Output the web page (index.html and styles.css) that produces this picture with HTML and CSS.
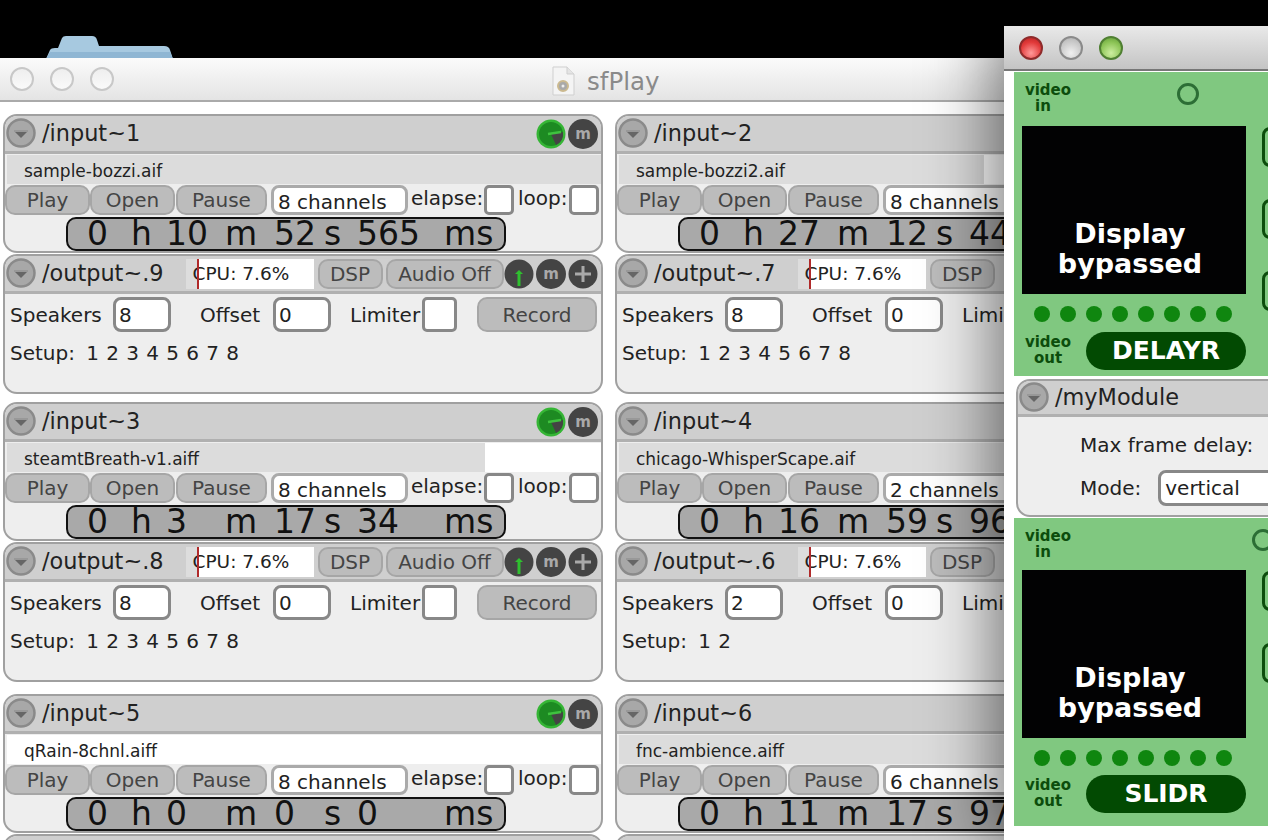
FILE: index.html
```html
<!doctype html>
<html>
<head>
    <meta charset="utf-8">
    <title>sfPlay</title>
    <link rel="stylesheet" href="styles.css">
</head>
<body>
<svg class="defs" width="0" height="0">
    <symbol id="arrow" viewBox="0 0 30 30">
        <circle cx="15" cy="15" r="13.5" fill="#a8a8a8" stroke="#8a8a8a" stroke-width="2.5"/>
        <path d="M9 14h12l-6 6z" fill="#666"/>
        <path d="M8 13h14" stroke="#888" stroke-width="1"/>
    </symbol>
    <symbol id="rec" viewBox="0 0 30 30">
        <circle cx="15" cy="15" r="14.5" fill="#35b535"/>
        <circle cx="15" cy="15" r="12" fill="#1d8a22"/>
        <path d="M15 15L27 13A12 12 0 0 1 20 26z" fill="#444"/>
        <path d="M12 15l13-2" stroke="#3fc23f" stroke-width="2.5"/>
    </symbol>
    <symbol id="meter" viewBox="0 0 30 30">
        <circle cx="15" cy="15" r="14.5" fill="#444"/>
        <path d="M15 27V13" stroke="#2fc02f" stroke-width="3"/>
        <path d="M11 15l4-4 4 4z" fill="#2fc02f"/>
    </symbol>
    <symbol id="plus" viewBox="0 0 30 30">
        <circle cx="15" cy="15" r="14.5" fill="#444"/>
        <path d="M15 7v16M7 15h16" stroke="#a9a9a9" stroke-width="3"/>
    </symbol>
</svg>

<div class="folder">
    <svg width="130" height="24" viewBox="0 0 130 24">
        <path d="M0 24L4 15Q5 13 9 13H12L16 3Q17 1 20 1H46Q50 1 51 5L53 11H118Q123 11 124 15L127 24z" fill="#a7c9e0"/>
        <path d="M0 24L4 17H124L127 24z" fill="#8fb6d3"/>
    </svg>
</div>

<!-- hinteres Fenster -->
<div class="window back">
    <div class="titlebar">
        <div class="lights">
            <span class="light"></span>
            <span class="light"></span>
            <span class="light"></span>
        </div>
        <div class="wintitle">
            <svg width="24" height="30" viewBox="0 0 24 30">
                <path d="M2 1H16L23 8V29H2z" fill="#f4f4f4" stroke="#cfcfcf"/>
                <path d="M16 1V8H23" fill="#e4e4e4" stroke="#cfcfcf"/>
                <circle cx="12" cy="20" r="5" fill="#a9a9a9" stroke="#cbb98f" stroke-width="2"/>
                <circle cx="12" cy="20" r="1.5" fill="#eee"/>
            </svg>
            <span>sfPlay</span>
        </div>
    </div>

    <div class="patcher">
        <div class="pair">
            <div class="module input">
                <div class="head">
                    <svg class="ico"><use href="#arrow"/></svg>
                    <span class="name">/input~1</span>
                    <span class="icons"><svg class="ico"><use href="#rec"/></svg><span class="mbtn">m</span></span>
                </div>
                <div class="file"><div class="fill" style="width: 100%"></div><span>sample-bozzi.aif</span></div>
                <div class="controls">
                    <span class="btn play">Play</span><span class="btn open">Open</span><span class="btn pause">Pause</span>
                    <span class="field chans">8 channels</span>
                    <span class="lbl elapse">elapse:</span><span class="check"></span>
                    <span class="lbl loop">loop:</span><span class="check"></span>
                </div>
                <div class="time"><span>0</span><span>h</span><span>10</span><span>m</span><span>52</span><span>s</span><span>565</span><span>ms</span></div>
            </div>
            <div class="module output">
                <div class="head">
                    <svg class="ico"><use href="#arrow"/></svg>
                    <span class="name">/output~.9</span>
                    <span class="cpu"><i></i>CPU: 7.6%</span>
                    <span class="btn dsp">DSP</span><span class="btn audio">Audio Off</span>
                    <span class="icons"><svg class="ico"><use href="#meter"/></svg><span class="mbtn">m</span><svg class="ico"><use href="#plus"/></svg></span>
                </div>
                <div class="settings">
                    <span class="lbl spk">Speakers</span><span class="field num">8</span>
                    <span class="lbl off">Offset</span><span class="field num">0</span>
                    <span class="lbl lim">Limiter</span><span class="check big"></span>
                    <span class="btn record">Record</span>
                </div>
                <div class="setup">Setup: <b>1</b><b>2</b><b>3</b><b>4</b><b>5</b><b>6</b><b>7</b><b>8</b></div>
            </div>
        </div>

        <div class="pair">
            <div class="module input">
                <div class="head">
                    <svg class="ico"><use href="#arrow"/></svg>
                    <span class="name">/input~2</span>
                </div>
                <div class="file"><div class="fill" style="width: 61.5%"></div><span>sample-bozzi2.aif</span></div>
                <div class="controls">
                    <span class="btn play">Play</span><span class="btn open">Open</span><span class="btn pause">Pause</span>
                    <span class="field chans">8 channels</span>
                </div>
                <div class="time"><span>0</span><span>h</span><span>27</span><span>m</span><span>12</span><span>s</span><span>44</span></div>
            </div>
            <div class="module output">
                <div class="head">
                    <svg class="ico"><use href="#arrow"/></svg>
                    <span class="name">/output~.7</span>
                    <span class="cpu"><i></i>CPU: 7.6%</span>
                    <span class="btn dsp">DSP</span>
                </div>
                <div class="settings">
                    <span class="lbl spk">Speakers</span><span class="field num">8</span>
                    <span class="lbl off">Offset</span><span class="field num">0</span>
                    <span class="lbl lim">Limi</span>
                </div>
                <div class="setup">Setup: <b>1</b><b>2</b><b>3</b><b>4</b><b>5</b><b>6</b><b>7</b><b>8</b></div>
            </div>
        </div>

        <div class="pair">
            <div class="module input">
                <div class="head">
                    <svg class="ico"><use href="#arrow"/></svg>
                    <span class="name">/input~3</span>
                    <span class="icons"><svg class="ico"><use href="#rec"/></svg><span class="mbtn">m</span></span>
                </div>
                <div class="file"><div class="fill" style="width: 80.5%"></div><span>steamtBreath-v1.aiff</span></div>
                <div class="controls">
                    <span class="btn play">Play</span><span class="btn open">Open</span><span class="btn pause">Pause</span>
                    <span class="field chans">8 channels</span>
                    <span class="lbl elapse">elapse:</span><span class="check"></span>
                    <span class="lbl loop">loop:</span><span class="check"></span>
                </div>
                <div class="time"><span>0</span><span>h</span><span>3</span><span>m</span><span>17</span><span>s</span><span>34</span><span>ms</span></div>
            </div>
            <div class="module output">
                <div class="head">
                    <svg class="ico"><use href="#arrow"/></svg>
                    <span class="name">/output~.8</span>
                    <span class="cpu"><i></i>CPU: 7.6%</span>
                    <span class="btn dsp">DSP</span><span class="btn audio">Audio Off</span>
                    <span class="icons"><svg class="ico"><use href="#meter"/></svg><span class="mbtn">m</span><svg class="ico"><use href="#plus"/></svg></span>
                </div>
                <div class="settings">
                    <span class="lbl spk">Speakers</span><span class="field num">8</span>
                    <span class="lbl off">Offset</span><span class="field num">0</span>
                    <span class="lbl lim">Limiter</span><span class="check big"></span>
                    <span class="btn record">Record</span>
                </div>
                <div class="setup">Setup: <b>1</b><b>2</b><b>3</b><b>4</b><b>5</b><b>6</b><b>7</b><b>8</b></div>
            </div>
        </div>

        <div class="pair">
            <div class="module input">
                <div class="head">
                    <svg class="ico"><use href="#arrow"/></svg>
                    <span class="name">/input~4</span>
                </div>
                <div class="file"><div class="fill" style="width: 100%"></div><span>chicago-WhisperScape.aif</span></div>
                <div class="controls">
                    <span class="btn play">Play</span><span class="btn open">Open</span><span class="btn pause">Pause</span>
                    <span class="field chans">2 channels</span>
                </div>
                <div class="time"><span>0</span><span>h</span><span>16</span><span>m</span><span>59</span><span>s</span><span>96</span></div>
            </div>
            <div class="module output">
                <div class="head">
                    <svg class="ico"><use href="#arrow"/></svg>
                    <span class="name">/output~.6</span>
                    <span class="cpu"><i></i>CPU: 7.6%</span>
                    <span class="btn dsp">DSP</span>
                </div>
                <div class="settings">
                    <span class="lbl spk">Speakers</span><span class="field num">2</span>
                    <span class="lbl off">Offset</span><span class="field num">0</span>
                    <span class="lbl lim">Limi</span>
                </div>
                <div class="setup">Setup: <b>1</b><b>2</b></div>
            </div>
        </div>

        <div class="pair">
            <div class="module input">
                <div class="head">
                    <svg class="ico"><use href="#arrow"/></svg>
                    <span class="name">/input~5</span>
                    <span class="icons"><svg class="ico"><use href="#rec"/></svg><span class="mbtn">m</span></span>
                </div>
                <div class="file"><span>qRain-8chnl.aiff</span></div>
                <div class="controls">
                    <span class="btn play">Play</span><span class="btn open">Open</span><span class="btn pause">Pause</span>
                    <span class="field chans">8 channels</span>
                    <span class="lbl elapse">elapse:</span><span class="check"></span>
                    <span class="lbl loop">loop:</span><span class="check"></span>
                </div>
                <div class="time"><span>0</span><span>h</span><span>0</span><span>m</span><span>0</span><span>s</span><span>0</span><span>ms</span></div>
            </div>
            <div class="module output"><div class="head"></div></div>
        </div>

        <div class="pair">
            <div class="module input">
                <div class="head">
                    <svg class="ico"><use href="#arrow"/></svg>
                    <span class="name">/input~6</span>
                </div>
                <div class="file"><div class="fill" style="width: 100%"></div><span>fnc-ambience.aiff</span></div>
                <div class="controls">
                    <span class="btn play">Play</span><span class="btn open">Open</span><span class="btn pause">Pause</span>
                    <span class="field chans">6 channels</span>
                </div>
                <div class="time"><span>0</span><span>h</span><span>11</span><span>m</span><span>17</span><span>s</span><span>97</span></div>
            </div>
            <div class="module output"><div class="head"></div></div>
        </div>
    </div>
</div>

<!-- vorderes Fenster -->
<div class="window front">
    <div class="titlebar">
        <div class="lights">
            <span class="light red"></span>
            <span class="light grey"></span>
            <span class="light green"></span>
        </div>
    </div>
    <div class="front-body">
        <div class="jit">
            <div class="jit-top">
                <div class="vid">video<br><span>in</span></div>
                <span class="ring"></span>
            </div>
            <div class="jit-main">
                <div class="screen">Display<br>bypassed</div>
                <div class="side"><span></span><span></span><span></span></div>
            </div>
            <div class="dots"><i></i><i></i><i></i><i></i><i></i><i></i><i></i><i></i></div>
            <div class="jit-bottom">
                <div class="vid">video<br>out</div>
                <div class="pill">DELAYR</div>
            </div>
        </div>

        <div class="module mymodule">
            <div class="head">
                <svg class="ico"><use href="#arrow"/></svg>
                <span class="name">/myModule</span>
            </div>
            <div class="params">
                <div class="param"><span class="lbl">Max frame delay:</span></div>
                <div class="param"><span class="lbl">Mode:</span><span class="field mode">vertical</span></div>
            </div>
        </div>

        <div class="jit second">
            <div class="jit-top">
                <div class="vid">video<br><span>in</span></div>
                <span class="ring"></span>
            </div>
            <div class="jit-main">
                <div class="screen">Display<br>bypassed</div>
                <div class="side"><span></span><span></span></div>
            </div>
            <div class="dots"><i></i><i></i><i></i><i></i><i></i><i></i><i></i><i></i></div>
            <div class="jit-bottom">
                <div class="vid">video<br>out</div>
                <div class="pill">SLIDR</div>
            </div>
        </div>
    </div>
</div>
</body>
</html>
```

FILE: styles.css
```css
html, body {
    margin: 0;
    height: 840px;
    overflow: hidden;
}

body {
    position: relative;
    background: #000;
    font-family: "DejaVu Sans", sans-serif;
    font-size: 20px;
    color: #222;
}

.defs {
    position: absolute;
}

.folder {
    position: absolute;
    left: 46px;
    top: 35px;
}

/* Fenster */
.window.back {
    position: absolute;
    left: 0;
    top: 58px;
    width: 1010px;
    height: 782px;
    background: #fff;
    overflow: hidden;
}

.window.front {
    position: absolute;
    left: 1004px;
    top: 26px;
    width: 264px;
    height: 814px;
    background: #fff;
    border-top-left-radius: 6px;
    box-shadow: 0 0 70px 8px rgba(0, 0, 0, .55);
}

.titlebar {
    display: flex;
    align-items: center;
    height: 42px;
    background: linear-gradient(#fbfbfb, #e4e4e4);
    border-bottom: 2px solid #aaa;
}

.front .titlebar {
    height: 43px;
    background: linear-gradient(#e9e9e9, #c4c4c4);
    border-bottom-color: #777;
}

.lights {
    display: flex;
    gap: 16px;
    padding-left: 10px;
}

.front .lights {
    padding-left: 15px;
}

.light {
    width: 20px;
    height: 20px;
    border: 2px solid #c8c8c8;
    border-radius: 50%;
    background: linear-gradient(#eee, #fafafa);
}

.light.red {
    border-color: #8e2b2b;
    background: radial-gradient(circle at 50% 75%, #ff9a9a, #e23a3a 60%, #b52222);
}

.light.grey {
    border-color: #8a8a8a;
    background: radial-gradient(circle at 50% 75%, #f0f0f0, #c4c4c4 70%, #a8a8a8);
}

.light.green {
    border-color: #4f7f32;
    background: radial-gradient(circle at 50% 75%, #cdeea0, #8cc456 60%, #5f9a35);
}

.wintitle {
    position: absolute;
    left: 551px;
    top: 8px;
    display: flex;
    align-items: center;
    gap: 12px;
    font-size: 24.5px;
    color: #8a8a8a;
}

/* Module */
.patcher {
    display: grid;
    grid-template-columns: 600px 600px;
    grid-template-rows: 288px 292px auto;
    column-gap: 12px;
    padding: 12px 0 0 3px;
}

.module {
    border: 2px solid #a0a0a0;
    border-radius: 14px;
    background: #eee;
    overflow: hidden;
    box-sizing: border-box;
}

.module.input {
    height: 139px;
}

.module.output {
    height: 140px;
    margin-top: 1px;
}

.head {
    display: flex;
    align-items: center;
    height: 35px;
    background: #cfcfcf;
    border-bottom: 3px solid #b0b0b0;
    flex: none;
}

.ico {
    width: 30px;
    height: 30px;
    flex: none;
}

.head > .ico {
    margin: 0 0 2px 1px;
}

.name {
    margin: 0 0 2px 6px;
    font-size: 22.4px;
    white-space: nowrap;
}

.icons {
    display: flex;
    margin-left: auto;
    margin-right: 3px;
    gap: 2px;
}

.mbtn {
    flex: none;
    width: 30px;
    height: 30px;
    border-radius: 50%;
    background: #444;
    color: #a9a9a9;
    font-size: 15px;
    font-weight: bold;
    line-height: 31px;
    text-align: center;
}

.file {
    position: relative;
    height: 29px;
    margin: 1px 0 0 2px;
    background: #fff;
    line-height: 33px;
    font-size: 17px;
}

.fill {
    position: absolute;
    left: 0;
    top: 0;
    bottom: 0;
    background: #dcdcdc;
}

.file span {
    position: relative;
    margin-left: 17px;
}

.controls {
    display: flex;
    align-items: center;
    height: 31px;
}

.btn {
    display: flex;
    align-items: center;
    justify-content: center;
    box-sizing: border-box;
    height: 30px;
    flex: none;
    background: #bcbcbc;
    border: 2px solid #a6a6a6;
    border-radius: 10px;
    color: #444;
    font-size: 20px;
    white-space: nowrap;
}

.btn.play {
    width: 85px;
}

.btn.open {
    width: 85px;
}

.btn.pause {
    width: 91px;
    margin-left: 1px;
}

.field {
    box-sizing: border-box;
    flex: none;
    background: #fff;
    border: 3px solid #888;
    border-radius: 8px;
    white-space: nowrap;
    overflow: hidden;
}

.field.chans {
    width: 137px;
    height: 30px;
    margin-left: 4px;
    padding-left: 4px;
    line-height: 28px;
    border-color: #aaa;
}

.lbl {
    flex: none;
    white-space: nowrap;
}

.lbl.elapse {
    width: 73px;
    margin: 0 0 4px 3px;
}

.lbl.loop {
    width: 51px;
    margin: 0 0 4px 4px;
}

.check {
    box-sizing: border-box;
    flex: none;
    width: 30px;
    height: 30px;
    background: #fff;
    border: 3px solid #888;
    border-radius: 5px;
}

.time {
    display: grid;
    grid-template-columns: 44px 35px 59px 49px 50px 33px 87px auto;
    align-items: center;
    box-sizing: border-box;
    width: 440px;
    height: 34px;
    margin: 2px 0 0 61px;
    padding-left: 19px;
    background: #a9a9a9;
    border: 2px solid #111;
    border-radius: 10px;
    font-size: 33px;
    line-height: 30px;
    color: #111;
    white-space: nowrap;
}

/* Ausgang */
.cpu {
    position: relative;
    box-sizing: border-box;
    flex: none;
    width: 128px;
    height: 30px;
    margin-left: 22px;
    padding-left: 7px;
    background: linear-gradient(to right, #ddd 11px, #fff 11px);
    font-size: 18.5px;
    line-height: 30px;
    white-space: nowrap;
    overflow: hidden;
}

.cpu i {
    position: absolute;
    left: 11px;
    top: 0;
    bottom: 0;
    width: 2px;
    background: #b02a2a;
}

.btn.dsp {
    width: 65px;
    margin-left: 4px;
}

.btn.audio {
    width: 118px;
    margin-left: 3px;
}

.settings {
    display: flex;
    align-items: center;
    height: 41px;
}

.lbl.spk {
    width: 103px;
    margin-left: 5px;
}

.field.num {
    width: 58px;
    height: 35px;
    padding-left: 3px;
    line-height: 30px;
}

.lbl.off {
    width: 73px;
    margin-left: 29px;
}

.lbl.lim {
    width: 72px;
    margin-left: 19px;
}

.check.big {
    width: 35px;
    height: 35px;
}

.btn.record {
    width: 120px;
    height: 35px;
    margin-left: 20px;
}

.setup {
    margin: 6px 0 0 5px;
}

.setup b {
    display: inline-block;
    width: 20px;
    font-weight: normal;
}

.setup b:first-of-type {
    margin-left: 5px;
}

/* vorderes Fenster, Jitter-Module */
.front-body {
    padding: 1px 0 0 10px;
}

.jit {
    height: 304px;
    background: #80c880;
    overflow: hidden;
}

.jit.second {
    height: 308px;
    margin-top: 1px;
}

.jit-top {
    display: flex;
    height: 54px;
}

.second .jit-top {
    height: 52px;
}

.vid {
    flex: none;
    width: 68px;
    padding-top: 10px;
    font-size: 15px;
    font-weight: bold;
    line-height: 16px;
    text-align: center;
    color: #0c4d0c;
}

.vid span {
    margin-right: 10px;
}

.ring {
    flex: none;
    width: 16px;
    height: 16px;
    margin: 11px 0 0 95px;
    border: 3px solid #2c6e35;
    border-radius: 50%;
}

.second .ring {
    margin-left: 170px;
}

.jit-main {
    display: flex;
    height: 168px;
    margin-left: 8px;
}

.screen {
    display: flex;
    align-items: flex-end;
    justify-content: center;
    flex: none;
    box-sizing: border-box;
    width: 224px;
    height: 168px;
    padding: 0 8px 15px 0;
    background: #020203;
    color: #fff;
    font-size: 27px;
    font-weight: bold;
    line-height: 30px;
    text-align: center;
}

.side {
    display: flex;
    flex-direction: column;
    gap: 32px;
    margin-left: 16px;
    padding-top: 1px;
}

.side span {
    flex: none;
    width: 20px;
    height: 34px;
    border: 3px solid #0c4d0c;
    border-radius: 8px;
}

.dots {
    display: flex;
    gap: 10px;
    height: 16px;
    margin: 12px 0 0 20px;
}

.dots i {
    width: 16px;
    height: 16px;
    border-radius: 50%;
    background: #0f860f;
}

.jit-bottom {
    display: flex;
    margin-top: 10px;
}

.second .jit-bottom {
    margin-top: 9px;
}

.jit-bottom .vid {
    padding-top: 2px;
}

.pill {
    flex: none;
    width: 160px;
    height: 38px;
    margin-left: 4px;
    background: #024a02;
    border-radius: 19px;
    color: #fff;
    font-size: 25px;
    font-weight: bold;
    line-height: 38px;
    text-align: center;
}

.mymodule {
    width: 270px;
    height: 138px;
    margin: 3px 0 0 2px;
}

.mymodule .head {
    height: 33px;
}

.params {
    padding-top: 6px;
}

.param {
    display: flex;
    align-items: center;
    height: 43px;
    padding-left: 62px;
}

.field.mode {
    width: 150px;
    height: 36px;
    margin-left: 17px;
    padding-left: 4px;
    line-height: 31px;
}
```
